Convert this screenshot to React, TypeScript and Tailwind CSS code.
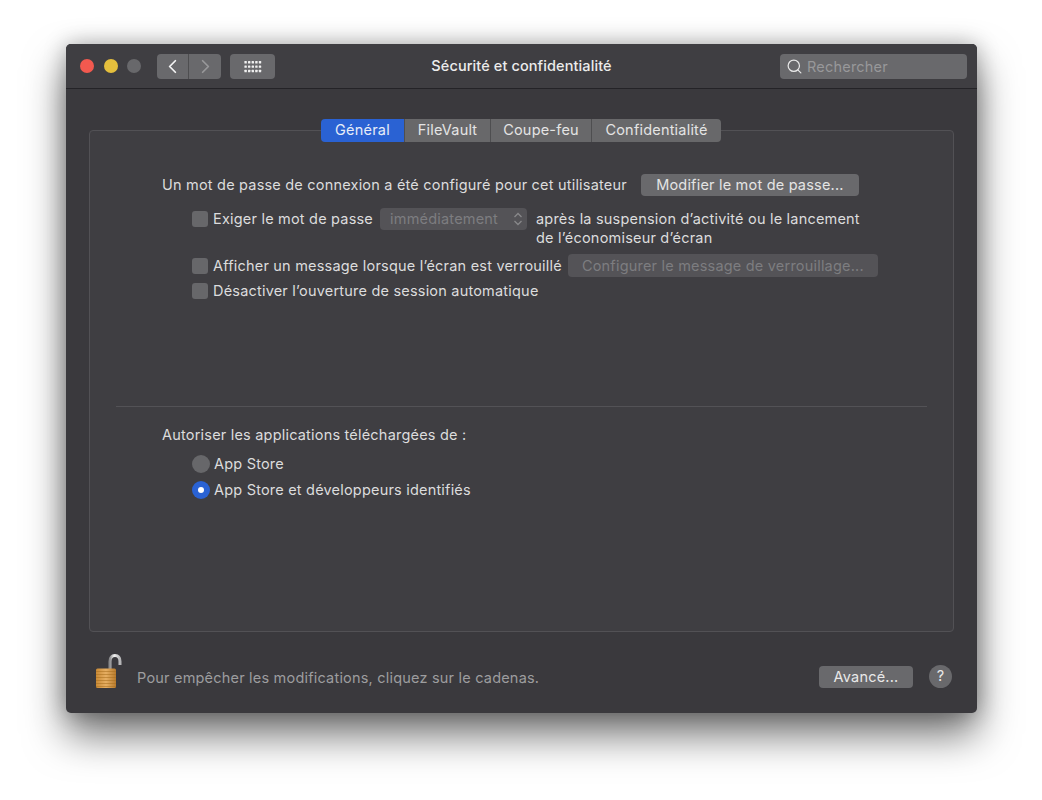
import { ChevronLeft, ChevronRight, Search } from "lucide-react";

const font = "font-['Inter','Liberation_Sans',sans-serif]";

const Checkbox: React.FC = () => (
  <div className="w-[16px] h-[16px] rounded-[3px] bg-[#67676a] shrink-0" />
);

const Tab: React.FC<{ label: string; width: string; active?: boolean }> = ({ label, width, active }) => (
  <div
    className={`${width} h-full flex items-center justify-center pb-[1px] ${
      active ? "bg-[#2a62d3] text-[#e6ecf8]" : "bg-[#68686a] text-[#e4e4e4] border-l border-[#4e4e50]"
    }`}
  >
    {label}
  </div>
);

const AppGrid: React.FC = () => (
  <svg width="18" height="13" viewBox="0 0 18 13" fill="#f0f0f0">
    {[0, 1, 2].map((r) =>
      [0, 1, 2, 3, 4].map((c) => <rect key={`${r}-${c}`} x={c * 3.6 + 0.4} y={r * 4.4 + 1} width="2.4" height="2.4" rx="0.5" />)
    )}
  </svg>
);

const Lock: React.FC = () => (
  <svg width="30" height="38" viewBox="0 0 30 38">
    <defs>
      <linearGradient id="shackle" x1="0" x2="1" y1="0" y2="0">
        <stop offset="0" stopColor="#8c8c8e" />
        <stop offset="0.4" stopColor="#f2f2f2" />
        <stop offset="1" stopColor="#b5b5b7" />
      </linearGradient>
      <linearGradient id="body" x1="0" x2="1" y1="0" y2="0">
        <stop offset="0" stopColor="#c98a36" />
        <stop offset="0.5" stopColor="#e6ae62" />
        <stop offset="1" stopColor="#b77a2c" />
      </linearGradient>
    </defs>
    <path d="M17 16 V8.5 C17 4.5 19.2 2.5 22 2.5 C24.8 2.5 27 4.5 27 8.5 V12" fill="none" stroke="url(#shackle)" strokeWidth="3" />
    <rect x="3" y="15.5" width="20" height="19.5" rx="1.5" fill="url(#body)" />
    {[18, 21, 24, 27, 30, 33].map((y) => (
      <rect key={y} x="3" y={y} width="20" height="1" fill="#a8701f" opacity="0.55" />
    ))}
  </svg>
);

const App: React.FC = () => {
  return (
    <div className={`w-[1042px] h-[800px] bg-white overflow-hidden pt-[44px] pl-[66px] ${font}`}>
      <div className="w-[911px] h-[669px] rounded-[5px] bg-[#3a393d] shadow-[0_22px_40px_rgba(0,0,0,0.55),0_0_22px_rgba(0,0,0,0.28)] flex flex-col text-[14.5px] text-[#dcdcdd] tracking-[0.2px]">
        {/* title bar */}
        <div className="h-[45px] shrink-0 grid grid-cols-[1fr_auto_1fr] items-center border-b border-[#242327] rounded-t-[5px] bg-[#3f3e42] px-[14px]">
          <div className="flex items-center">
            <div className="w-[14px] h-[14px] rounded-full bg-[#f2594f]" />
            <div className="w-[14px] h-[14px] rounded-full bg-[#e5bf3d] ml-[10px]" />
            <div className="w-[14px] h-[14px] rounded-full bg-[#68686b] ml-[9px]" />
            <div className="flex ml-[16px] h-[25px]">
              <div className="w-[32px] rounded-l-[4px] bg-[#69696c] flex items-center justify-center border-r border-[#4e4e50]">
                <ChevronLeft size={23} strokeWidth={1.8} className="text-[#f4f4f4]" />
              </div>
              <div className="w-[32px] rounded-r-[4px] bg-[#69696c] flex items-center justify-center">
                <ChevronRight size={23} strokeWidth={1.8} className="text-[#98989a]" />
              </div>
            </div>
            <div className="w-[45px] h-[25px] ml-[9px] rounded-[4px] bg-[#69696c] flex items-center justify-center">
              <AppGrid />
            </div>
          </div>
          <div className="text-[#ececec] font-medium text-[14.5px] tracking-[0.1px]">Sécurité et confidentialité</div>
          <div className="flex justify-end -mr-[4px]">
            <div className="w-[187px] h-[25px] rounded-[4px] bg-[#69696c] flex items-center pl-[6px] text-[#98989a]">
              <Search size={17} strokeWidth={1.7} className="text-[#e8e8e8]" />
              <span className="ml-[4px] mt-[1px]">Rechercher</span>
            </div>
          </div>
        </div>

        {/* tabs + panel */}
        <div className="ml-[23px] mr-[24px] mt-[30px] flex justify-center relative z-10">
          <div className="h-[23px] w-[400px] rounded-[4px] overflow-hidden flex">
            <Tab label="Général" width="w-[83px]" active />
            <Tab label="FileVault" width="w-[86px]" />
            <Tab label="Coupe-feu" width="w-[101px]" />
            <Tab label="Confidentialité" width="w-[130px]" />
          </div>
        </div>
        <div className="mx-[23px] -mt-[12px] h-[502px] rounded-[4px] border border-[#525155] bg-[#3f3e42] flex flex-col shrink-0">
          <div className="pl-[72px] pt-[42px] h-[275px]">
            <div className="flex items-center h-[23px]">
              <span>Un mot de passe de connexion a été configuré pour cet utilisateur</span>
              <div className="w-[218px] h-[22px] ml-[14px] rounded-[4px] bg-[#69696c] text-[#e4e4e4] flex items-center justify-center">
                Modifier le mot de passe...
              </div>
            </div>
            <div className="flex items-start pl-[30px] mt-[12px]">
              <div className="flex items-center h-[22px]">
                <Checkbox />
                <span className="ml-[5px]">Exiger le mot de passe</span>
                <div className="w-[147px] h-[22px] ml-[7px] rounded-[4px] bg-[#545357] text-[#7d7d80] flex items-center pl-[10px] relative">
                  immédiatement
                  <svg className="absolute right-[2px] top-[3px]" width="14" height="16" viewBox="0 0 14 16" fill="none" stroke="#88888a" strokeWidth="1.3">
                    <path d="M3.5 6 L7 2.5 L10.5 6" />
                    <path d="M3.5 10 L7 13.5 L10.5 10" />
                  </svg>
                </div>
              </div>
              <div className="ml-[9px] leading-[19px] pt-[1px]">
                après la suspension d’activité ou le lancement
                <br />
                de l’économiseur d’écran
              </div>
            </div>
            <div className="flex items-center pl-[30px] mt-[7px] h-[23px]">
              <Checkbox />
              <span className="ml-[5px]">Afficher un message lorsque l’écran est verrouillé</span>
              <div className="w-[310px] h-[23px] ml-[6px] rounded-[4px] bg-[#545357] text-[#7d7d80] flex items-center justify-center">
                Configurer le message de verrouillage...
              </div>
            </div>
            <div className="flex items-center pl-[30px] mt-[2px] h-[23px]">
              <Checkbox />
              <span className="ml-[5px]">Désactiver l’ouverture de session automatique</span>
            </div>
          </div>
          <div className="mx-[26px] h-px bg-[#535256]" />
          <div className="pl-[72px] pt-[17px]">
            <div className="h-[21px] flex items-center">Autoriser les applications téléchargées de :</div>
            <div className="pl-[30px] mt-[8px] flex items-center h-[21px]">
              <div className="w-[18px] h-[18px] rounded-full bg-[#67676a]" />
              <span className="ml-[4px]">App Store</span>
            </div>
            <div className="pl-[30px] mt-[5px] flex items-center h-[21px]">
              <div className="w-[18px] h-[18px] rounded-full bg-[#2a62d3] flex items-center justify-center">
                <div className="w-[6px] h-[6px] rounded-full bg-white" />
              </div>
              <span className="ml-[4px]">App Store et développeurs identifiés</span>
            </div>
          </div>
        </div>

        {/* footer */}
        <div className="flex-1 flex items-center pl-[27px] pr-[25px] pb-[1px]">
          <Lock />
          <span className="ml-[14px] mt-[11px] text-[#9d9d9f]">Pour empêcher les modifications, cliquez sur le cadenas.</span>
          <div className="flex-1" />
          <div className="w-[94px] h-[22px] mt-[9px] rounded-[4px] bg-[#69696c] text-[#e8e8e8] flex items-center justify-center">Avancé...</div>
          <div className="w-[23px] h-[23px] ml-[16px] mt-[8px] rounded-full bg-[#69696c] text-[#e8e8e8] flex items-center justify-center">?</div>
        </div>
      </div>
    </div>
  );
};

export default App;
